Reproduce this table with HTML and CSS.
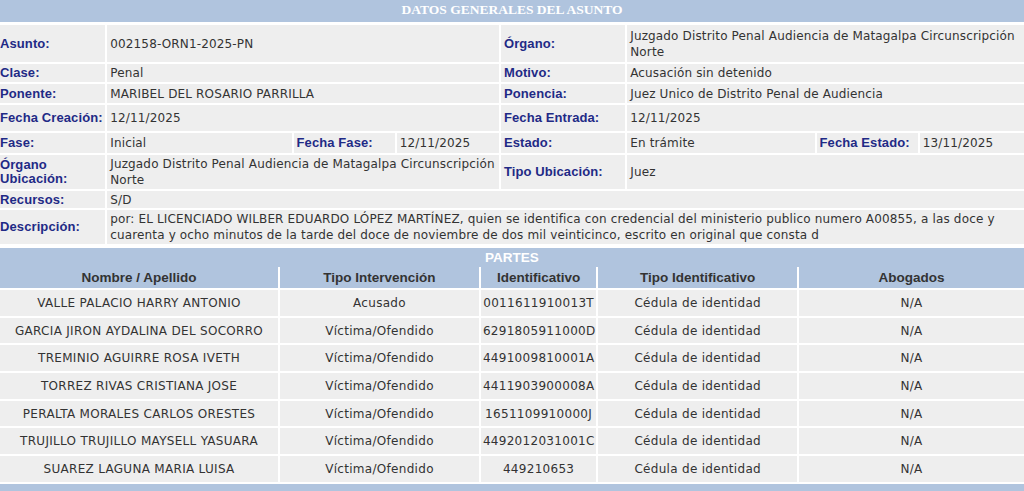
FILE: index.html
```html
<!DOCTYPE html>
<html lang="es">
<head>
<meta charset="utf-8">
<title>Datos generales del asunto</title>
<link rel="stylesheet" href="styles.css">
</head>
<body>
<div class="page">
  <div class="bar bar-serif">DATOS GENERALES DEL ASUNTO</div>
  <table class="datos">
    <colgroup>
      <col class="c1"><col class="c2"><col class="c3"><col class="c4">
      <col class="c5"><col class="c6"><col class="c7"><col class="c8">
    </colgroup>
    <tr class="h37">
      <th class="first">Asunto:</th>
      <td colspan="3">002158-ORN1-2025-PN</td>
      <th>Órgano:</th>
      <td colspan="3">Juzgado Distrito Penal Audiencia de Matagalpa Circunscripción Norte</td>
    </tr>
    <tr class="h18">
      <th class="first">Clase:</th>
      <td colspan="3">Penal</td>
      <th>Motivo:</th>
      <td colspan="3">Acusación sin detenido</td>
    </tr>
    <tr class="h19">
      <th class="first">Ponente:</th>
      <td colspan="3">MARIBEL DEL ROSARIO PARRILLA</td>
      <th>Ponencia:</th>
      <td colspan="3">Juez Unico de Distrito Penal de Audiencia</td>
    </tr>
    <tr class="h26">
      <th class="first">Fecha Creación:</th>
      <td colspan="3">12/11/2025</td>
      <th>Fecha Entrada:</th>
      <td colspan="3">12/11/2025</td>
    </tr>
    <tr class="h20">
      <th class="first">Fase:</th>
      <td>Inicial</td>
      <th>Fecha Fase:</th>
      <td>12/11/2025</td>
      <th>Estado:</th>
      <td>En trámite</td>
      <th>Fecha Estado:</th>
      <td>13/11/2025</td>
    </tr>
    <tr class="h34">
      <th class="first wrap">Órgano Ubicación:</th>
      <td colspan="3">Juzgado Distrito Penal Audiencia de Matagalpa Circunscripción Norte</td>
      <th>Tipo Ubicación:</th>
      <td colspan="3">Juez</td>
    </tr>
    <tr class="h17">
      <th class="first">Recursos:</th>
      <td colspan="7">S/D</td>
    </tr>
    <tr class="h34">
      <th class="first">Descripción:</th>
      <td colspan="7">por: EL LICENCIADO WILBER EDUARDO LÓPEZ MARTÍNEZ, quien se identifica con credencial del ministerio publico numero A00855, a las doce y cuarenta y ocho minutos de la tarde del doce de noviembre de dos mil veinticinco, escrito en original que consta d</td>
    </tr>
  </table>

  <div class="bar bar-sans">PARTES</div>
  <table class="partes">
    <colgroup>
      <col class="p1"><col class="p2"><col class="p3"><col class="p4"><col class="p5">
    </colgroup>
    <tr class="head">
      <th>Nombre / Apellido</th>
      <th>Tipo Intervención</th>
      <th>Identificativo</th>
      <th>Tipo Identificativo</th>
      <th>Abogados</th>
    </tr>
    <tr><td>VALLE PALACIO HARRY ANTONIO</td><td>Acusado</td><td>0011611910013T</td><td>Cédula de identidad</td><td>N/A</td></tr>
    <tr><td>GARCIA JIRON AYDALINA DEL SOCORRO</td><td>Víctima/Ofendido</td><td>6291805911000D</td><td>Cédula de identidad</td><td>N/A</td></tr>
    <tr><td>TREMINIO AGUIRRE ROSA IVETH</td><td>Víctima/Ofendido</td><td>4491009810001A</td><td>Cédula de identidad</td><td>N/A</td></tr>
    <tr><td>TORREZ RIVAS CRISTIANA JOSE</td><td>Víctima/Ofendido</td><td>4411903900008A</td><td>Cédula de identidad</td><td>N/A</td></tr>
    <tr><td>PERALTA MORALES CARLOS ORESTES</td><td>Víctima/Ofendido</td><td>1651109910000J</td><td>Cédula de identidad</td><td>N/A</td></tr>
    <tr><td>TRUJILLO TRUJILLO MAYSELL YASUARA</td><td>Víctima/Ofendido</td><td>4492012031001C</td><td>Cédula de identidad</td><td>N/A</td></tr>
    <tr><td>SUAREZ LAGUNA MARIA LUISA</td><td>Víctima/Ofendido</td><td>449210653</td><td>Cédula de identidad</td><td>N/A</td></tr>
  </table>
  <div class="bar bar-bottom"></div>
</div>
</body>
</html>
```

FILE: styles.css
```css
html, body {
  margin: 0;
  padding: 0;
  background: #ffffff;
}

.page {
  width: 1024px;
  overflow: hidden;
  font-family: "DejaVu Sans", Verdana, sans-serif;
  font-size: 12px;
  letter-spacing: 0.15px;
  color: #333333;
}

.bar {
  background: #b0c4de;
  color: #ffffff;
  text-align: center;
  font-weight: bold;
  letter-spacing: 0;
}

.bar-serif {
  height: 22px;
  line-height: 20px;
  font-family: "Liberation Serif", "Times New Roman", serif;
  font-size: 13.5px;
  margin-bottom: 3px;
}

.bar-sans {
  height: 19px;
  line-height: 19px;
  font-family: "Liberation Sans", Arial, sans-serif;
  font-size: 13.5px;
  margin-top: 2px;
}

.bar-bottom {
  height: 8px;
  margin-top: 0;
}

table {
  border-collapse: separate;
  border-spacing: 2px;
  table-layout: fixed;
  width: 1028px;
  margin: -2px -2px 0;
}

.datos th,
.datos td {
  background: #eeeeee;
  padding: 0 3px;
  vertical-align: middle;
  text-align: left;
  line-height: 16px;
}

.datos td {
  font-weight: normal;
  padding-right: 1px;
}

.datos th {
  font-family: "Liberation Sans", Arial, sans-serif;
  font-size: 13px;
  font-weight: bold;
  letter-spacing: 0.1px;
  color: #1f2a86;
  line-height: 14px;
  white-space: nowrap;
  padding-right: 0;
}

.datos th.first {
  padding-left: 0;
}

.datos th.wrap {
  white-space: normal;
}

.c1 { width: 105px; }
.c2 { width: 184px; }
.c3 { width: 101px; }
.c4 { width: 102px; }
.c5 { width: 124px; }
.c6 { width: 187px; }
.c7 { width: 101px; }
.c8 { width: 104px; }

.h37 { height: 37px; }
.h34 { height: 34px; }
.h26 { height: 26px; }
.h20 { height: 20px; }
.h19 { height: 19px; }
.h18 { height: 18px; }
.h17 { height: 17px; }

.partes th,
.partes td {
  padding: 0 2px;
  text-align: center;
  vertical-align: middle;
  white-space: nowrap;
}

.partes th {
  background: #b0c4de;
  height: 21px;
  font-family: "Liberation Sans", Arial, sans-serif;
  font-size: 13.5px;
  font-weight: bold;
  letter-spacing: 0;
  color: #333333;
}

.partes td {
  background: #eeeeee;
  height: 25.7px;
  letter-spacing: 0.3px;
}

.p1 { width: 277px; }
.p2 { width: 198px; }
.p3 { width: 115px; }
.p4 { width: 198px; }
.p5 { width: 224px; }
```
